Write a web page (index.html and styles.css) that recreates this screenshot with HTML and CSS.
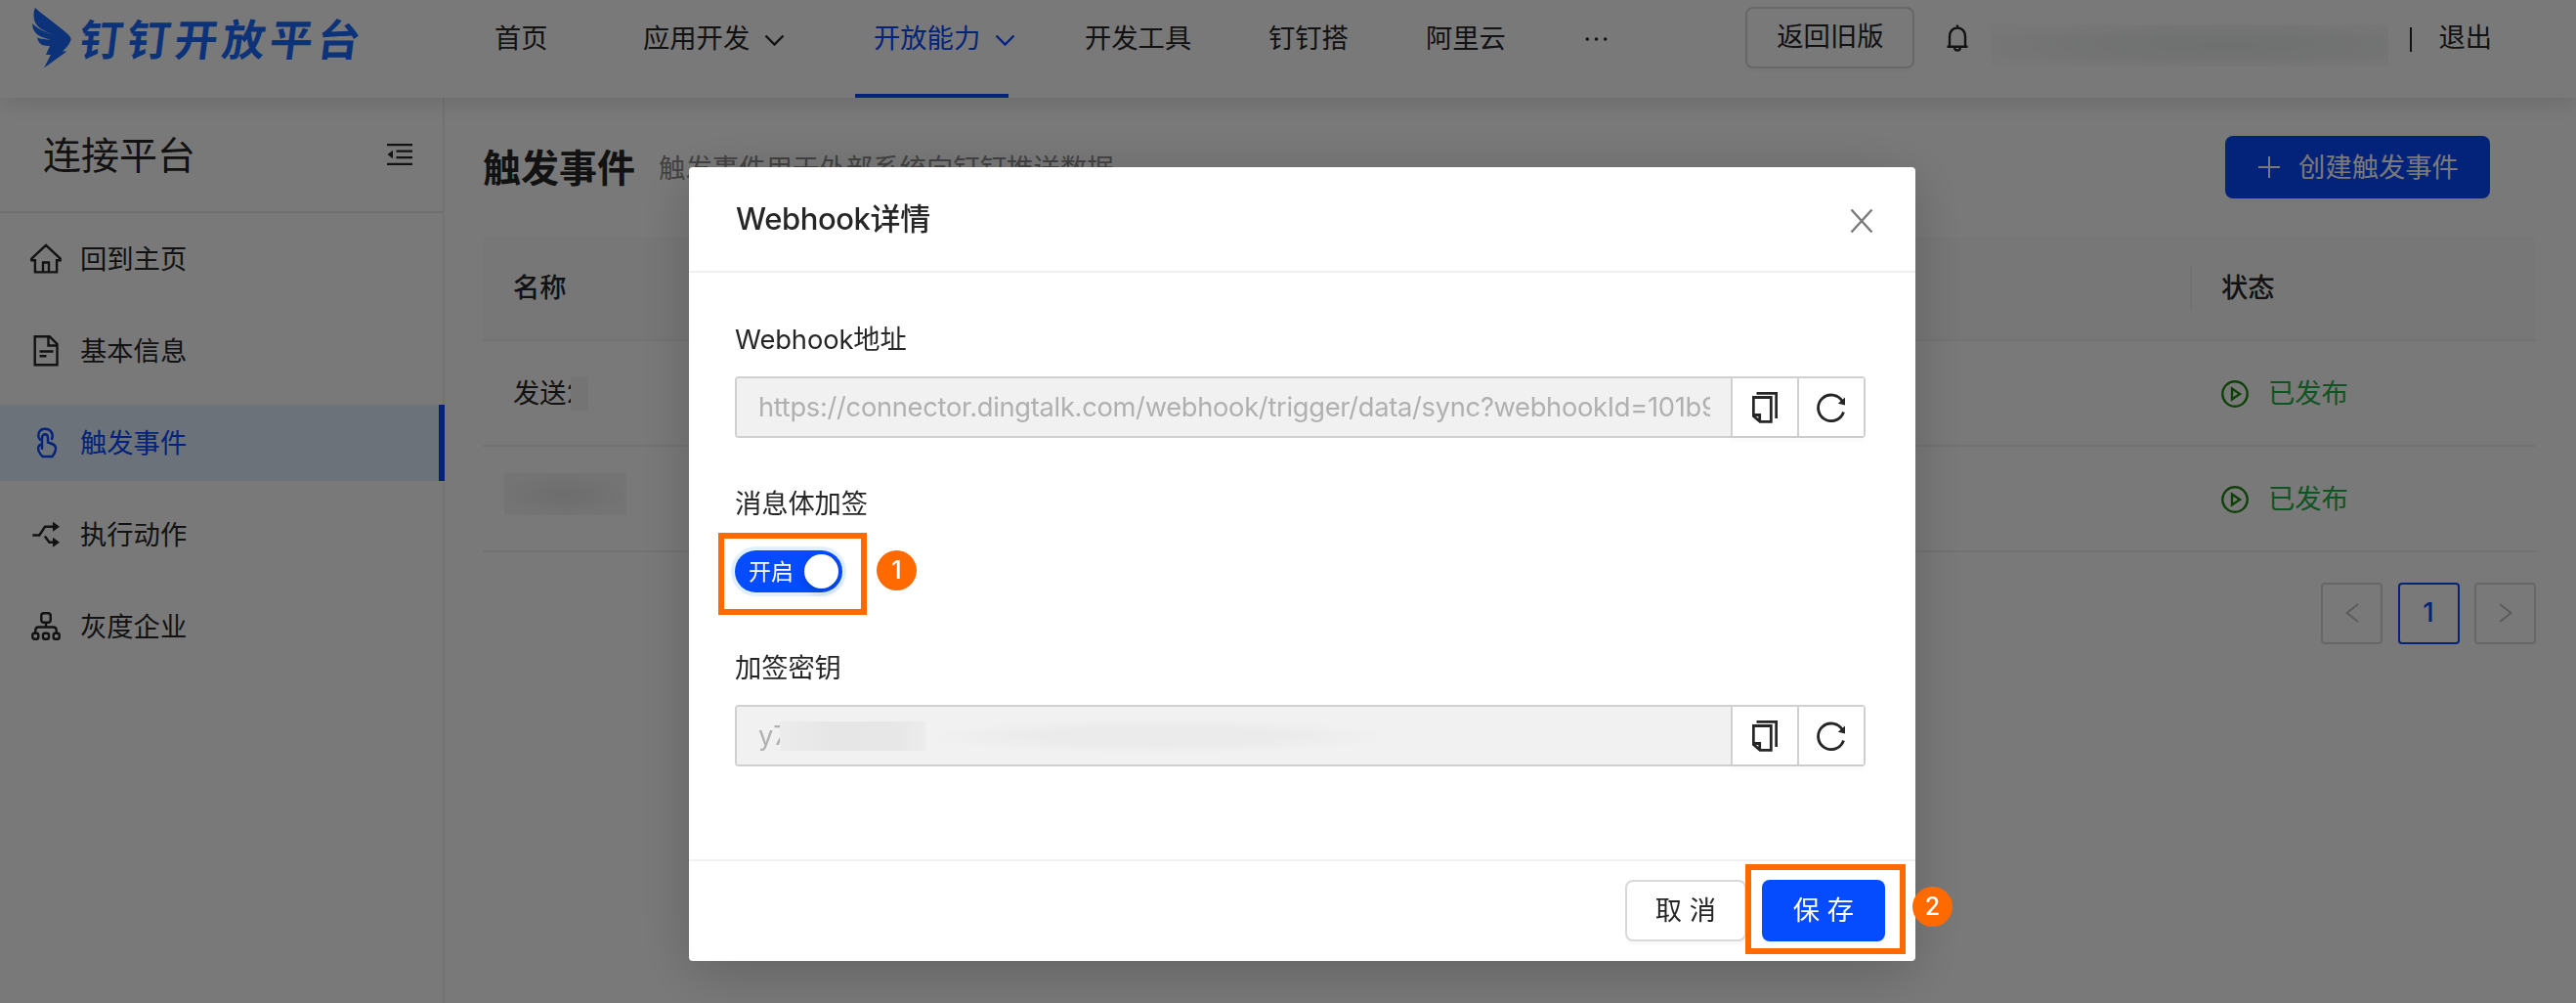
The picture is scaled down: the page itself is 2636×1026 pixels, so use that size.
FILE: index.html
```html
<!DOCTYPE html>
<html lang="zh-CN">

<head>
    <meta charset="UTF-8">
    <meta name="viewport" content="width=device-width, initial-scale=1.0">
    <title>钉钉开放平台</title>
    <link rel="stylesheet" href="styles.css">
</head>

<body>
    <header class="header">
        <div class="logo">
            <svg class="logo-wing" viewBox="0 0 40 62" fill="currentColor">
                <path d="M3 0C1 4 1 10 3 15c3 6 10 9 18 12.500C13 25 5 21 0 16c0 5 2 9 6 12 4 2.500 8 3.500 13 4.500-5 0-10-.5-14-2 1 4 3 7 7 8 2 .5 4 .5 6 .5l-4 9h5L12 61.500 35.500 44.500h-4.500C35 41 38 37 39.300 33.500c.8-2-.3-4-2.300-6C28 19 14 10 3 0z"/>
            </svg>
            <span class="logo-text">钉钉开放平台</span>
        </div>
        <nav class="nav">
            <a class="nav-item">首页</a>
            <a class="nav-item">应用开发
                <svg class="chevron" viewBox="0 0 21 12"><path d="M1.500 1.500 10.500 10.500 19.500 1.500"/></svg>
            </a>
            <a class="nav-item active">开放能力
                <svg class="chevron" viewBox="0 0 21 12"><path d="M1.500 1.500 10.500 10.500 19.500 1.500"/></svg>
            </a>
            <a class="nav-item">开发工具</a>
            <a class="nav-item">钉钉搭</a>
            <a class="nav-item">阿里云</a>
            <a class="nav-item">
                <svg class="more" viewBox="0 0 24 4" fill="currentColor"><circle cx="2.300" cy="2" r="1.800"/><circle cx="11.500" cy="2" r="1.800"/><circle cx="20.700" cy="2" r="1.800"/></svg>
            </a>
        </nav>
        <div class="header-right">
            <button class="old-version">返回旧版</button>
            <svg class="bell" viewBox="0 0 24 28" fill="none" stroke="currentColor" stroke-width="2.200">
                <path d="M1.500 22.700h21M4 22.500V12c0-5 3.500-8.500 8-8.500s8 3.500 8 8.500v10.500M12 3.500V.5M9 24c.4 1.800 1.500 2.600 3 2.600s2.600-.8 3-2.600"/>
            </svg>
            <span class="user-name"></span>
            <span class="separator"></span>
            <a class="logout">退出</a>
        </div>
    </header>

    <div class="layout">
        <aside class="sidebar">
            <div class="sidebar-title">
                <span>连接平台</span>
                <svg class="fold" viewBox="0 0 26 22">
                    <path d="M0 1.200h26M9.500 7.700H26M9.500 14.200H26M0 20.800h26" fill="none" stroke="currentColor" stroke-width="2.200"/>
                    <path class="solid" d="M6 6.800v8.400L.5 11z"/>
                </svg>
            </div>
            <ul class="menu">
                <li class="menu-item">
                    <svg class="menu-icon" viewBox="0 0 32 32">
                        <path d="M1.300 15.600 16 1.800l14.700 13.800v1.600h-3.600v12.200H4.900V17.200H1.300zM13 29v-9.500h6V29"/>
                    </svg>
                    <span>回到主页</span>
                </li>
                <li class="menu-item">
                    <svg class="menu-icon" viewBox="0 0 32 32">
                        <path d="M4.700 1.200h15l7.800 7.800v21.300H4.700zM18.500 1.500V10.500h9M9.500 16.500h14M9.500 21.200h7"/>
                    </svg>
                    <span>基本信息</span>
                </li>
                <li class="menu-item active">
                    <svg class="menu-icon" viewBox="0 0 32 32">
                        <path d="M10.500 13.500C6.500 9.500 8 1.800 15 1.800s9.200 6.500 6.700 11M12 19.500V11c0-5 6-5 6 0v4.500c4 1.200 7.500 2 8 5.500.2 4-1.500 6.500-3.500 9H12.500C9 26.500 7.800 23.500 8.200 20.500c.4-2 1.500-3 3.800-2.800v5"/>
                    </svg>
                    <span>触发事件</span>
                </li>
                <li class="menu-item">
                    <svg class="menu-icon" viewBox="0 0 32 32">
                        <path d="M2.300 16.500h7L15 7.800h8M14.800 17.500l4.700 6.300h4"/>
                        <path class="solid" d="M23 2.800 30 7.800 23 12.800zM23 18.800 30 23.800 23 28.800z"/>
                    </svg>
                    <span>执行动作</span>
                </li>
                <li class="menu-item">
                    <svg class="menu-icon" viewBox="0 0 32 32">
                        <rect x="11.300" y="2.300" width="9.400" height="9.400" rx="2.500"/>
                        <rect x="2.300" y="22.800" width="6" height="6" rx="2"/>
                        <rect x="13" y="22.800" width="6" height="6" rx="2"/>
                        <rect x="23.700" y="22.800" width="6" height="6" rx="2"/>
                        <path d="M16 12v4.500M5.300 22.500v-2.700c0-2 1-3.300 3-3.300h15.400c2 0 3 1.300 3 3.300v2.700"/>
                    </svg>
                    <span>灰度企业</span>
                </li>
            </ul>
        </aside>

        <main class="main">
            <div class="page-head">
                <h1>触发事件</h1>
                <p>触发事件用于外部系统向钉钉推送数据</p>
                <button class="create">
                    <svg class="plus" viewBox="0 0 22 22"><path d="M0 11h22M11 0v22"/></svg>
                    <span>创建触发事件</span>
                </button>
            </div>
            <div class="table">
                <div class="row row-head">
                    <div class="cell">名称</div>
                    <div class="cell cell-status">状态</div>
                </div>
                <div class="row">
                    <div class="cell">发送<span class="clip">2</span><span class="mask mask-short"></span></div>
                    <div class="cell status">
                        <svg class="play" viewBox="0 0 28 28"><circle cx="14" cy="14" r="12.700"/><path d="M11 8.500v11l8-5.500z"/></svg>
                        已发布
                    </div>
                </div>
                <div class="row">
                    <div class="cell"><span class="mask mask-long"></span></div>
                    <div class="cell status">
                        <svg class="play" viewBox="0 0 28 28"><circle cx="14" cy="14" r="12.700"/><path d="M11 8.500v11l8-5.500z"/></svg>
                        已发布
                    </div>
                </div>
            </div>
            <div class="pagination">
                <span class="page"><svg viewBox="0 0 14 20"><path d="M13 1 1.500 10 13 19"/></svg></span>
                <span class="page current">1</span>
                <span class="page"><svg viewBox="0 0 14 20"><path d="M1 1 12.500 10 1 19"/></svg></span>
            </div>
        </main>
    </div>

    <div class="overlay">
        <div class="modal">
            <div class="modal-header">
                <h2>Webhook详情</h2>
                <svg class="close" viewBox="0 0 24 24"><path d="M1.500.5 22.500 23.500M22.500.5 1.500 23.500"/></svg>
            </div>
            <div class="modal-body">
                <label class="label">Webhook地址</label>
                <div class="input-group">
                    <div class="input"><span class="url">https://connector.dingtalk.com/webhook/trigger/data/sync?webhookId=101b9</span></div>
                    <button class="icon-button">
                        <svg class="copy" viewBox="0 0 26 32">
                            <path d="M4.500 1.300h20.200V27" />
                            <path d="M1.300 5.500h18V30.300H8L1.300 24.500zM1.500 23.500h6.200v6.500"/>
                        </svg>
                    </button>
                    <button class="icon-button">
                        <svg class="redo" viewBox="0 0 30 30">
                            <path d="M26.300 8.500A13.300 13.300 0 1 0 27.500 19.500"/>
                            <path class="solid" d="M29 4.500v8l-7.200-1.800z"/>
                        </svg>
                    </button>
                </div>

                <label class="label">消息体加签</label>
                <div class="switch-line">
                    <div class="switch">开启<span class="knob"></span>
                        <span class="highlight highlight-switch"></span>
                        <span class="badge badge-switch">1</span>
                    </div>
                </div>

                <label class="label">加签密钥</label>
                <div class="input-group">
                    <div class="input"><span class="secret">y7</span><span class="secret-mask"></span><span class="secret-fade"></span></div>
                    <button class="icon-button">
                        <svg class="copy" viewBox="0 0 26 32">
                            <path d="M4.500 1.300h20.200V27" />
                            <path d="M1.300 5.500h18V30.300H8L1.300 24.500zM1.500 23.500h6.200v6.500"/>
                        </svg>
                    </button>
                    <button class="icon-button">
                        <svg class="redo" viewBox="0 0 30 30">
                            <path d="M26.300 8.500A13.300 13.300 0 1 0 27.500 19.500"/>
                            <path class="solid" d="M29 4.500v8l-7.200-1.800z"/>
                        </svg>
                    </button>
                </div>
            </div>
            <div class="modal-footer">
                <button class="cancel">取 消</button>
                <button class="save">保 存
                    <span class="highlight highlight-save"></span>
                    <span class="badge badge-save">2</span>
                </button>
            </div>
        </div>
    </div>
</body>

</html>
```

FILE: styles.css
```css
* {
    box-sizing: border-box;
}

body {
    margin: 0;
    height: 1026px;
    overflow: hidden;
    background-color: #fff;
    color: #262626;
    font-family: Inter, "Noto Sans CJK SC", sans-serif;
    font-size: 27.3px;
    line-height: 42px;
    white-space: nowrap;
}

button {
    font: inherit;
    color: inherit;
    background-color: #fff;
    border: 2px solid #d9d9d9;
    border-radius: 8px;
    padding: 0;
    display: flex;
    align-items: center;
    justify-content: center;
    box-shadow: 0 4px 0 rgba(0, 0, 0, 0.02);
}

svg {
    display: block;
    flex: none;
    fill: none;
    stroke: currentColor;
    stroke-width: 2.4;
}

.solid {
    fill: currentColor;
    stroke: none;
}

/* header */
.header {
    position: relative;
    display: flex;
    align-items: center;
    height: 100px;
    padding: 0 86px 22px 33px;
    background-color: #fff;
    box-shadow: 0 4px 24px rgba(0, 0, 0, 0.12);
}

.logo {
    display: flex;
    align-items: center;
    width: 473px;
    color: #1b6dff;
}

.logo-wing {
    width: 40px;
    height: 62px;
    fill: currentColor;
    stroke: none;
}

.logo-text {
    margin-left: 9px;
    padding-top: 4px;
    font-size: 44px;
    font-weight: 700;
    letter-spacing: 4.6px;
    line-height: 60px;
    transform: skewX(-7deg);
}

.nav {
    display: grid;
    grid-template-columns: 152px 236px 216px 188px 161px 163px 60px;
    flex: 1;
    height: 78px;
}

.nav-item {
    position: relative;
    display: flex;
    align-items: center;
    gap: 15px;
    padding-top: 1px;
}

.chevron {
    width: 21px;
    height: 12px;
    margin-top: 3px;
}

.more {
    width: 24px;
    height: 4px;
    fill: currentColor;
    stroke: none;
}

.active {
    color: #054bff;
}

.nav-item.active::after {
    content: "";
    position: absolute;
    left: -19px;
    bottom: -22px;
    width: 157px;
    height: 4px;
    background-color: #054bff;
}

.header-right {
    display: flex;
    align-items: center;
}

.old-version {
    width: 173px;
    height: 63px;
    margin: -2px 32px 0 0;
}

.bell {
    width: 24px;
    height: 28px;
    margin-right: 22px;
}

.user-name {
    width: 407px;
    height: 43px;
    margin: 14px 22px 0 0;
    background: radial-gradient(ellipse at 60% 50%, #eaecec, #f1f2f2 45%, #fafafa 80%);
}

.separator {
    width: 2px;
    height: 25px;
    margin: 2px 27px 0 0;
    background-color: #262626;
}

/* sidebar */
.layout {
    display: flex;
    height: 926px;
}

.sidebar {
    width: 455px;
    border-right: 2px solid #f0f0f0;
}

.sidebar-title {
    display: flex;
    align-items: center;
    justify-content: space-between;
    height: 118px;
    padding: 0 31px 0 44px;
    border-bottom: 2px solid #ebebeb;
    font-size: 39px;
}

.sidebar-title span {
    padding-top: 2px;
}

.fold {
    width: 26px;
    height: 22px;
}

.menu {
    display: flex;
    flex-direction: column;
    gap: 15.5px;
    list-style: none;
    margin: 7.5px -2px 0 0;
    padding: 0;
}

.menu-item {
    display: flex;
    align-items: center;
    gap: 19px;
    height: 78.5px;
    padding-left: 31px;
}

.menu-item span {
    padding-top: 3px;
}

.menu-item.active {
    background-color: #e1f0ff;
    border-right: 6px solid #054bff;
}

.menu-icon {
    width: 32px;
    height: 32px;
}

/* main */
.main {
    flex: 1;
    padding: 39px 41px 0 39px;
}

.page-head {
    display: flex;
    align-items: center;
    height: 64px;
    padding-right: 47px;
}

.page-head h1 {
    margin: 2px 24px 0 0;
    font-size: 39px;
    font-weight: 700;
}

.page-head p {
    margin: 2px 0 0;
    flex: 1;
    color: #8c8c8c;
    font-size: 27.4px;
}

.create {
    width: 271px;
    height: 64px;
    gap: 19px;
    padding-left: 2px;
    color: #fff;
    background-color: #054bff;
    border: none;
}

.create span {
    padding-top: 2px;
}

.plus {
    width: 22px;
    height: 22px;
    stroke-width: 2;
}

.table {
    margin-top: 39px;
}

.row {
    display: grid;
    grid-template-columns: 1747px 1fr;
    height: 108px;
    border-bottom: 2px solid #f0f0f0;
}

.row-head {
    height: 107px;
    background-color: #fafafa;
    border-radius: 4px 4px 0 0;
    font-weight: 500;
}

.cell {
    display: flex;
    align-items: center;
    padding: 1px 0 0 31px;
}

.cell-status {
    align-self: center;
    height: 45px;
    border-left: 2px solid #f0f0f0;
    padding-left: 30px;
}

.status {
    gap: 20px;
    padding-left: 32px;
    color: #23b14b;
}

.play {
    width: 28px;
    height: 28px;
    color: #1c8a12;
}

.clip {
    width: 4px;
    overflow: hidden;
}

.mask {
    background: radial-gradient(ellipse, #e6e6e6, #f5f5f5 75%);
}

.mask-short {
    width: 18px;
    height: 35px;
    background: #f4f4f4;
}

.mask-long {
    width: 125px;
    height: 43px;
    margin: -10px 0 0 -9px;
}

.pagination {
    display: flex;
    justify-content: flex-end;
    gap: 15.5px;
    margin-top: 30.5px;
}

.page {
    display: flex;
    align-items: center;
    justify-content: center;
    width: 63px;
    height: 63px;
    border: 2px solid #d9d9d9;
    border-radius: 4px;
    color: #bfbfbf;
}

.page svg {
    width: 14px;
    height: 20px;
    stroke-width: 2;
}

.page.current {
    color: #054bff;
    border-color: #054bff;
    font-weight: 500;
}

/* modal */
.overlay {
    position: fixed;
    inset: 0;
    display: flex;
    align-items: flex-start;
    justify-content: center;
    padding: 171px 0 0 29px;
    background-color: rgba(0, 0, 0, 0.525);
}

.modal {
    display: flex;
    flex-direction: column;
    width: 1255px;
    height: 812px;
    background-color: #fff;
    border-radius: 4px;
    box-shadow: 0 12px 60px rgba(0, 0, 0, 0.2);
}

.modal-header {
    display: flex;
    align-items: center;
    justify-content: space-between;
    height: 108px;
    padding: 0 43px 0 48px;
    border-bottom: 2px solid #f0f0f0;
}

.modal-header h2 {
    margin: 0;
    font-size: 31px;
    font-weight: 500;
    letter-spacing: -0.4px;
}

.close {
    width: 24px;
    height: 24px;
    margin-top: 3px;
    color: #7a7a7a;
}

.modal-body {
    flex: 1;
    padding: 48px 51px 0 47px;
}

.label {
    display: block;
    letter-spacing: -0.1px;
}

.input-group {
    display: flex;
    height: 63px;
    margin: 16px 0 47px;
    border: 2px solid #d0d0d0;
    border-radius: 4px;
}

.input {
    display: flex;
    align-items: center;
    flex: 1;
    padding-left: 22px;
    background-color: #f1f1f1;
    color: #b0b0b0;
}

.url {
    width: 974px;
    overflow: hidden;
    letter-spacing: -0.3px;
}

.icon-button {
    width: 68px;
    background-color: #fff;
    border: none;
    border-left: 2px solid #d0d0d0;
    border-radius: 0;
    box-shadow: 0 6px 0 rgba(0, 0, 0, 0.015);
}

.copy {
    width: 26px;
    height: 32px;
    stroke-width: 2.8;
}

.redo {
    width: 30px;
    height: 30px;
    stroke-width: 2.8;
}

.switch-line {
    height: 43px;
    margin: 26px 0 57px;
}

.switch {
    position: relative;
    display: flex;
    align-items: center;
    justify-content: space-between;
    width: 110px;
    height: 43px;
    padding: 0 4px 0 14px;
    border-radius: 22px;
    background-color: #054bff;
    color: #fff;
    font-size: 23px;
    box-shadow: 0 0 0 4px #e1f0ff;
}

.knob {
    width: 35px;
    height: 35px;
    border-radius: 50%;
    background-color: #fff;
    box-shadow: 0 4px 8px rgba(0, 35, 11, 0.2);
}

/* numbered step markers, drawn over the dialog */
.highlight {
    position: absolute;
    border: 6px solid #ff6a00;
}

.highlight-switch {
    left: -17px;
    top: -18px;
    width: 152px;
    height: 84px;
}

.highlight-save {
    left: -17px;
    top: -16px;
    width: 164px;
    height: 92px;
}

.badge {
    position: absolute;
    width: 41px;
    height: 41px;
    border-radius: 50%;
    background-color: #ff6a00;
    color: #fff;
    font-size: 25px;
    font-weight: 500;
    line-height: 41px;
    text-align: center;
}

.badge-switch {
    left: 145px;
    top: 0;
}

.badge-save {
    left: 154px;
    top: 7px;
}

.secret {
    width: 22px;
    overflow: hidden;
}

.secret-mask {
    width: 149px;
    height: 30px;
    background: linear-gradient(90deg, #ececec, #e6e6e6 35%, #e7e7e7 80%, #ececec);
}

.secret-fade {
    width: 480px;
    height: 36px;
    background: radial-gradient(ellipse closest-side, #ebebeb 50%, #f1f1f1);
}

.modal-footer {
    display: flex;
    justify-content: flex-end;
    gap: 16px;
    height: 104px;
    padding: 19px 31px 0 0;
    border-top: 2px solid #f0f0f0;
}

.cancel,
.save {
    width: 124px;
    height: 63px;
}

.save {
    position: relative;
    width: 126px;
    background-color: #054bff;
    border: none;
    color: #fff;
}
```
